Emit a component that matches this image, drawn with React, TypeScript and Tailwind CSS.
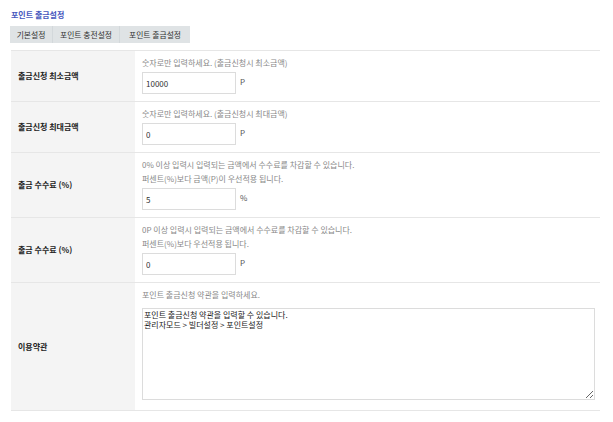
import React from 'react';

const font = { fontFamily: '"Noto Sans CJK KR", "Noto Sans", sans-serif' };

const Row: React.FC<{ label: string; children: React.ReactNode; last?: boolean }> = ({ label, children, last }) => (
  <div className={`flex ${last ? '' : 'border-b border-[#e6e6e6]'}`}>
    <div className="w-[124px] shrink-0 bg-[#f4f4f4] flex items-center pl-[7px] text-[8px] font-bold text-[#222]">
      {label}
    </div>
    <div className={`flex-1 pl-[7px] pr-[4px] pt-[5px] ${last ? 'pb-[10px]' : 'pb-[7px]'}`}>{children}</div>
  </div>
);

const Hint: React.FC<{ children: React.ReactNode }> = ({ children }) => (
  <p className="text-[8px] leading-[14px] text-[#888]">{children}</p>
);

const NumInput: React.FC<{ value: string; unit: string }> = ({ value, unit }) => (
  <div className="flex items-center mt-[2px]">
    <input
      readOnly
      value={value}
      className="w-[94px] h-[22px] border border-[#dcdcdc] bg-white px-[3px] text-[8px] text-[#333] outline-none"
      style={font}
    />
    <span className="ml-[4px] text-[8px] text-[#555] -mt-[3px]">{unit}</span>
  </div>
);

export default function App() {
  return (
    <div className="w-[613px] h-[422px] bg-white px-[10px] pt-[8px]" style={font}>
      <h2 className="ml-[1px] text-[8px] font-bold text-[#4656bd] leading-[14px]">포인트 출금설정</h2>

      <div className="mt-[4px] flex w-[180px] h-[17px] bg-[#dfe3e5] text-[7.8px] text-[#333]">
        <div className="w-[43px] flex items-center justify-center border-r border-[#d3d8db]">기본설정</div>
        <div className="w-[67px] flex items-center justify-center border-r border-[#d3d8db]">포인트 충전설정</div>
        <div className="flex-1 flex items-center justify-center">포인트 출금설정</div>
      </div>

      <div className="mt-[7px] ml-[1px] w-[589px] border-t border-b border-[#e6e6e6]">
        <Row label="출금신청 최소금액">
          <Hint>숫자로만 입력하세요. (출금신청시 최소금액)</Hint>
          <NumInput value="10000" unit="P" />
        </Row>
        <Row label="출금신청 최대금액">
          <Hint>숫자로만 입력하세요. (출금신청시 최대금액)</Hint>
          <NumInput value="0" unit="P" />
        </Row>
        <Row label="출금 수수료 (%)">
          <Hint>0% 이상 입력시 입력되는 금액에서 수수료를 차감할 수 있습니다.</Hint>
          <Hint>퍼센트(%)보다 금액(P)이 우선적용 됩니다.</Hint>
          <NumInput value="5" unit="%" />
        </Row>
        <Row label="출금 수수료 (%)">
          <Hint>0P 이상 입력시 입력되는 금액에서 수수료를 차감할 수 있습니다.</Hint>
          <Hint>퍼센트(%)보다 우선적용 됩니다.</Hint>
          <NumInput value="0" unit="P" />
        </Row>
        <Row label="이용약관" last>
          <Hint>포인트 출금신청 약관을 입력하세요.</Hint>
          <textarea
            readOnly
            className="block mt-[6px] w-[453px] h-[92px] border border-[#dcdcdc] bg-white px-[1px] py-[1px] text-[8px] leading-[10px] text-[#222] outline-none"
            style={font}
            value={'포인트 출금신청 약관을 입력할 수 있습니다.\n관리자모드 > 빌더설정 > 포인트설정'}
          />
        </Row>
      </div>
    </div>
  );
}
